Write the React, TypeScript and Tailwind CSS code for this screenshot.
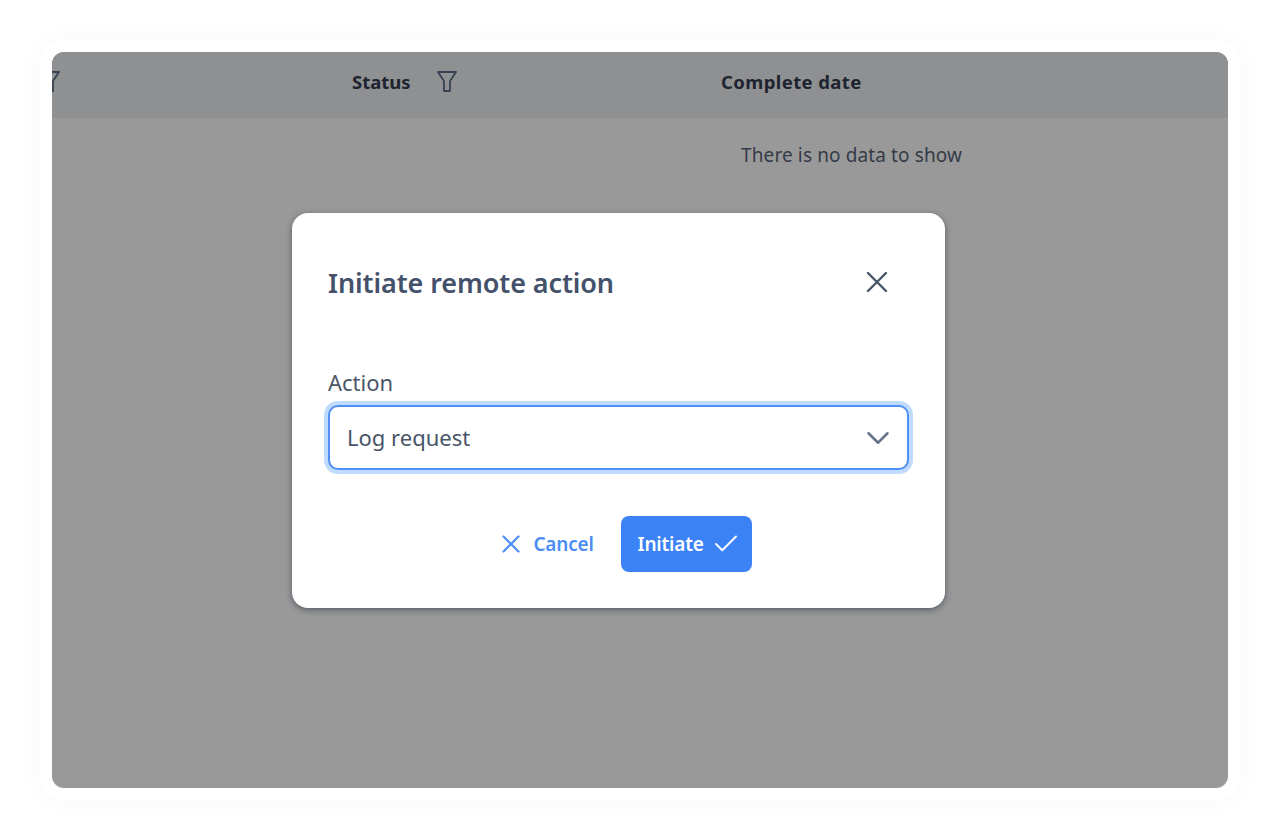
import React from 'react';
import { ChevronDown, Check, X } from 'lucide-react';

const font = "font-['Noto_Sans',sans-serif]";

function FunnelIcon({ className }: { className?: string }) {
  return (
    <svg className={className} width="20" height="21" viewBox="0 0 20 21" fill="none" stroke="currentColor" strokeWidth="1.8" strokeLinejoin="round">
      <path d="M1 1H19L13 10V20H7V10Z" />
    </svg>
  );
}

export default function App() {
  return (
    <div className={`h-[840px] w-[1280px] overflow-hidden bg-white p-10 ${font}`}>
      <div className="h-[760px] rounded-[24px] bg-white p-3 shadow-[0_0_24px_rgba(0,0,0,0.03)]">
        <div className="relative h-[736px] overflow-hidden rounded-xl bg-[#999999]">
          {/* table header behind the overlay */}
          <div className="relative h-[66px] bg-[#8f9091]">
            <FunnelIcon className="absolute left-[-12px] top-[19px] text-[#374151]" />
            <span className="absolute left-[300px] top-[18px] text-[18.5px] leading-[24px] font-bold text-[#1d2430]">Status</span>
            <FunnelIcon className="absolute left-[385px] top-[19px] text-[#374151]" />
            <span className="absolute left-[669px] top-[18px] text-[18.5px] leading-[24px] font-bold tracking-[0.4px] text-[#1d2430]">Complete date</span>
          </div>
          <p className="pt-[25px] pl-[689px] text-[19px] leading-[24px] tracking-[0.12px] text-[#343b47]">There is no data to show</p>

          {/* modal */}
          <div className="absolute left-[240px] top-[161px] flex h-[395px] w-[653px] flex-col rounded-2xl bg-white px-9 pt-[49px] shadow-[0_2px_6px_rgba(30,41,59,0.55)]">
            <div className="flex items-center justify-between">
              <h2 className="text-[27px] leading-[42px] font-semibold tracking-[-0.1px] text-[#44516a]">Initiate remote action</h2>
              <X className="mr-[14px] mb-[2px] text-[#475569]" size={36} strokeWidth={1.6} />
            </div>
            <label className="mt-[64px] text-[22px] leading-[28px] text-[#4b5768]">Action</label>
            <div className="mt-[9px] flex h-[65px] w-[581px] items-center justify-between rounded-[10px] border-2 border-[#4f8ff7] bg-white pr-[10px] pl-[17px] shadow-[0_0_0_4px_#bfdbfe]">
              <span className="text-[22px] text-[#475569]">Log request</span>
              <ChevronDown className="text-[#64748b]" size={38} strokeWidth={1.6} />
            </div>
            <div className="mt-[46px] flex items-center justify-center gap-[27px] pl-[11px]">
              <button className="flex items-center gap-[7px] text-[19px] font-semibold tracking-[-0.2px] text-[#4b8cf7]">
                <X size={30} strokeWidth={1.7} />
                Cancel
              </button>
              <button className="flex h-[56px] w-[131px] items-center gap-[7px] rounded-[8px] bg-[#3b82f6] pl-[17px] text-[19px] font-semibold tracking-[-0.2px] text-white">
                Initiate
                <Check size={30} strokeWidth={1.5} />
              </button>
            </div>
          </div>
        </div>
      </div>
    </div>
  );
}
